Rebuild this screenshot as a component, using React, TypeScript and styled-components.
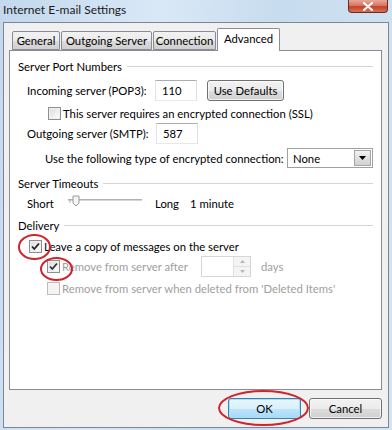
import styled, { createGlobalStyle } from 'styled-components';

const GlobalStyle = createGlobalStyle`
  html, body {
    margin: 0;
    padding: 0;
  }
  body {
    width: 392px;
    height: 430px;
    overflow: hidden;
    font-family: Lato, "Open Sans", sans-serif;
    font-size: 11.3px;
    color: #000;
  }
`;

const Window = styled.div`
  position: relative;
  width: 392px;
  height: 430px;
  display: flex;
  flex-direction: column;
  background: linear-gradient(100deg, #c3d8ee 0%, #d9e8f6 35%, #c7dcef 60%, #d3e4f3 100%);
`;

const TitleBar = styled.div`
  height: 22px;
  display: flex;
  justify-content: space-between;
  align-items: flex-start;
`;

const Title = styled.div`
  padding: 2px 0 0 3px;
  font-size: 12px;
  line-height: 16px;
  color: #1a1a1a;
`;

const CloseButton = styled.div`
  width: 40px;
  height: 13px;
  margin-right: 4px;
  box-sizing: border-box;
  border: 1px solid #6b2a20;
  border-top: none;
  border-radius: 0 0 4px 4px;
  background: linear-gradient(180deg, #e8a899 0%, #d7705c 50%, #c2402a 55%, #d8735a 100%);
  display: flex;
  align-items: center;
  justify-content: center;
`;

const Client = styled.div`
  margin: 0 3px;
  height: 406px;
  box-sizing: border-box;
  border: 1px solid #7d8793;
  background: #f0f0f0;
  padding-top: 5px;
  display: flex;
  flex-direction: column;
`;

const TabStrip = styled.div`
  position: relative;
  z-index: 1;
  height: 22px;
  width: 373px;
  margin-left: 5px;
  padding-left: 3px;
  box-sizing: border-box;
  display: flex;
  align-items: flex-end;
`;

const Tab = styled.div<{ $w: number; $active?: boolean }>`
  width: ${(p) => p.$w}px;
  height: ${(p) => (p.$active ? 23 : 19)}px;
  margin-bottom: ${(p) => (p.$active ? -1 : 0)}px;
  margin-right: 1px;
  box-sizing: border-box;
  border: 1px solid #898c95;
  border-bottom: ${(p) => (p.$active ? 'none' : '1px solid #898c95')};
  border-radius: 2px 2px 0 0;
  background: ${(p) =>
    p.$active ? '#fff' : 'linear-gradient(180deg, #f2f2f2 0%, #ebebeb 50%, #dddddd 51%, #cfcfcf 100%)'};
  display: flex;
  align-items: ${(p) => (p.$active ? 'flex-start' : 'center')};
  padding-top: ${(p) => (p.$active ? 3 : 0)}px;
  justify-content: center;
  white-space: nowrap;
`;

const Panel = styled.div`
  width: 373px;
  height: 340px;
  margin-left: 5px;
  box-sizing: border-box;
  border: 1px solid #898c95;
  background: #fff;
  padding: 0 8px 0 8px;
  display: flex;
  flex-direction: column;
`;

const Header = styled.div<{ $mt: number }>`
  height: 16px;
  margin-top: ${(p) => p.$mt}px;
  display: flex;
  align-items: center;
  white-space: nowrap;
  &::after {
    content: '';
    flex: 1;
    height: 1px;
    margin-left: 5px;
    background: #d5d5d5;
  }
`;

const Row = styled.div<{ $mt: number; $h: number; $indent: number }>`
  height: ${(p) => p.$h}px;
  margin-top: ${(p) => p.$mt}px;
  padding-left: ${(p) => p.$indent}px;
  display: flex;
  align-items: center;
  white-space: nowrap;
`;

const Label = styled.span<{ $w?: number; $disabled?: boolean }>`
  ${(p) => (p.$w ? `width: ${p.$w}px; flex-shrink: 0;` : '')}
  color: ${(p) => (p.$disabled ? '#a0a0a0' : '#000')};
`;

const TextBox = styled.div<{ $w: number }>`
  width: ${(p) => p.$w}px;
  height: 21px;
  box-sizing: border-box;
  border: 1px solid;
  border-color: #abadb3 #dbdfe6 #e3e9ef #e2e3ea;
  padding-left: 6px;
  display: flex;
  align-items: center;
  background: #fff;
`;

const PushButton = styled.div<{ $w: number; $default?: boolean }>`
  width: ${(p) => p.$w}px;
  height: 21px;
  box-sizing: border-box;
  border: 1px solid ${(p) => (p.$default ? '#3c7fb1' : '#707070')};
  border-radius: 3px;
  background: ${(p) =>
    p.$default
      ? 'linear-gradient(180deg, #eaf6fd 0%, #d9f0fc 50%, #bee6fd 51%, #a7d9f5 100%)'
      : 'linear-gradient(180deg, #f2f2f2 0%, #ebebeb 50%, #dddddd 51%, #cfcfcf 100%)'};
  box-shadow: inset 0 0 0 1px ${(p) => (p.$default ? '#a6e1f8' : 'rgba(255,255,255,0.7)')};
  display: flex;
  align-items: center;
  justify-content: center;
`;

const Box = styled.div<{ $disabled?: boolean }>`
  width: 13px;
  height: 13px;
  flex-shrink: 0;
  margin-right: 2px;
  box-sizing: border-box;
  border: 1px solid ${(p) => (p.$disabled ? '#bcbcbc' : '#8f8f8f')};
  background: ${(p) =>
    p.$disabled ? '#f4f4f4' : 'linear-gradient(135deg, #dcdcdc 0%, #f4f4f4 70%, #fff 100%)'};
  box-shadow: inset 0 0 0 1px ${(p) => (p.$disabled ? '#f4f4f4' : '#f0f0f0')};
  display: flex;
  align-items: center;
  justify-content: center;
`;

const Select = styled.div`
  width: 86px;
  height: 20px;
  box-sizing: border-box;
  border: 1px solid #a0a0a0;
  display: flex;
  align-items: center;
  padding: 1px;
  background: #fff;
`;

const SelectText = styled.span`
  flex: 1;
  padding-left: 4px;
`;

const DropButton = styled.div`
  width: 17px;
  height: 16px;
  box-sizing: border-box;
  border: 1px solid #a5a5a5;
  background: linear-gradient(180deg, #f2f2f2 0%, #e0e0e0 50%, #d2d2d2 100%);
  display: flex;
  align-items: center;
  justify-content: center;
`;

const Spinner = styled.div`
  width: 50px;
  height: 21px;
  box-sizing: border-box;
  border: 1px solid #d6d6d6;
  display: flex;
  justify-content: flex-end;
  margin-right: 10px;
`;

const SpinButtons = styled.div`
  width: 16px;
  display: flex;
  flex-direction: column;
  border-left: 1px solid #e0e0e0;
`;

const SpinHalf = styled.div`
  flex: 1;
  display: flex;
  align-items: center;
  justify-content: center;
  background: #f4f4f4;
  & + & {
    border-top: 1px solid #e0e0e0;
  }
`;

const ButtonRow = styled.div`
  margin-top: 8px;
  padding-right: 6px;
  display: flex;
  justify-content: flex-end;
  gap: 8px;
`;

const Ring = styled.div<{ $x: number; $y: number; $w: number; $h: number }>`
  position: absolute;
  left: ${(p) => p.$x}px;
  top: ${(p) => p.$y}px;
  width: ${(p) => p.$w}px;
  height: ${(p) => p.$h}px;
  box-sizing: border-box;
  border: 2px solid #d0232b;
  border-radius: 50%;
  pointer-events: none;
`;

function Check({ dim }: { dim?: boolean }) {
  return (
    <svg width="11" height="11" viewBox="0 0 11 11">
      <path d="M2 5.5 L4.3 8 L9 2.5" fill="none" stroke={dim ? '#333' : '#222'} strokeWidth="1.8" />
    </svg>
  );
}

function CheckBox({ checked, disabled, label, labelWidth }: {
  checked?: boolean;
  disabled?: boolean;
  label: string;
  labelWidth?: number;
}) {
  return (
    <>
      <Box $disabled={disabled && !checked}>{checked && <Check dim={disabled} />}</Box>
      <Label $disabled={disabled} $w={labelWidth}>{label}</Label>
    </>
  );
}

function Slider() {
  return (
    <svg width="74" height="16" viewBox="0 0 74 16" style={{ marginRight: 13 }}>
      <rect x="0" y="4" width="74" height="2" fill="#d6d6d6" />
      <rect x="0" y="4" width="74" height="1" fill="#b0b0b0" />
      <path d="M5 1 H11 V8 L8 11 L5 8 Z" fill="#f4f4f4" stroke="#9a9a9a" strokeWidth="1" />
      <line x1="2" y1="4" x2="2" y2="8" stroke="#b0b0b0" />
    </svg>
  );
}

export default function App() {
  return (
    <>
      <GlobalStyle />
      <Window>
        <TitleBar>
          <Title>Internet E-mail Settings</Title>
          <CloseButton>
            <svg width="12" height="9" viewBox="0 0 12 9">
              <path d="M2 1 L10 8 M10 1 L2 8" stroke="#fff" strokeWidth="2.2" strokeLinecap="round" />
            </svg>
          </CloseButton>
        </TitleBar>
        <Client>
          <TabStrip>
            <Tab $w={48}>General</Tab>
            <Tab $w={91}>Outgoing Server</Tab>
            <Tab $w={63}>Connection</Tab>
            <Tab $w={63} $active>Advanced</Tab>
          </TabStrip>
          <Panel>
            <Header $mt={7}>Server Port Numbers</Header>
            <Row $mt={6} $h={21} $indent={9}>
              <Label $w={128}>Incoming server (POP3):</Label>
              <TextBox $w={42}>110</TextBox>
              <PushButton $w={77} style={{ marginLeft: 10 }}>Use Defaults</PushButton>
            </Row>
            <Row $mt={5} $h={14} $indent={30}>
              <CheckBox label="This server requires an encrypted connection (SSL)" />
            </Row>
            <Row $mt={3} $h={21} $indent={9}>
              <Label $w={129}>Outgoing server (SMTP):</Label>
              <TextBox $w={42}>587</TextBox>
            </Row>
            <Row $mt={4} $h={20} $indent={27}>
              <Label $w={242}>Use the following type of encrypted connection:</Label>
              <Select>
                <SelectText>None</SelectText>
                <DropButton>
                  <svg width="7" height="4" viewBox="0 0 7 4">
                    <path d="M0 0 H7 L3.5 4 Z" fill="#000" />
                  </svg>
                </DropButton>
              </Select>
            </Row>
            <Header $mt={7}>Server Timeouts</Header>
            <Row $mt={4} $h={16} $indent={9}>
              <Label $w={41}>Short</Label>
              <Slider />
              <Label $w={35}>Long</Label>
              <Label>1 minute</Label>
            </Row>
            <Header $mt={6}>Delivery</Header>
            <Row $mt={6} $h={14} $indent={11}>
              <CheckBox checked label="Leave a copy of messages on the server" />
            </Row>
            <Row $mt={3} $h={21} $indent={29}>
              <CheckBox checked disabled label="Remove from server after" labelWidth={139} />
              <Spinner>
                <SpinButtons>
                  <SpinHalf>
                    <svg width="5" height="3" viewBox="0 0 5 3"><path d="M0 3 L2.5 0 L5 3 Z" fill="#b5b5b5" /></svg>
                  </SpinHalf>
                  <SpinHalf>
                    <svg width="5" height="3" viewBox="0 0 5 3"><path d="M0 0 H5 L2.5 3 Z" fill="#b5b5b5" /></svg>
                  </SpinHalf>
                </SpinButtons>
              </Spinner>
              <Label $disabled>days</Label>
            </Row>
            <Row $mt={4} $h={14} $indent={29}>
              <CheckBox disabled label="Remove from server when deleted from 'Deleted Items'" />
            </Row>
          </Panel>
          <ButtonRow>
            <PushButton $w={73} $default>OK</PushButton>
            <PushButton $w={73}>Cancel</PushButton>
          </ButtonRow>
        </Client>
        <Ring $x={18} $y={234} $w={33} $h={26} />
        <Ring $x={40} $y={257} $w={33} $h={24} />
        <Ring $x={218} $y={390} $w={91} $h={36} />
      </Window>
    </>
  );
}
